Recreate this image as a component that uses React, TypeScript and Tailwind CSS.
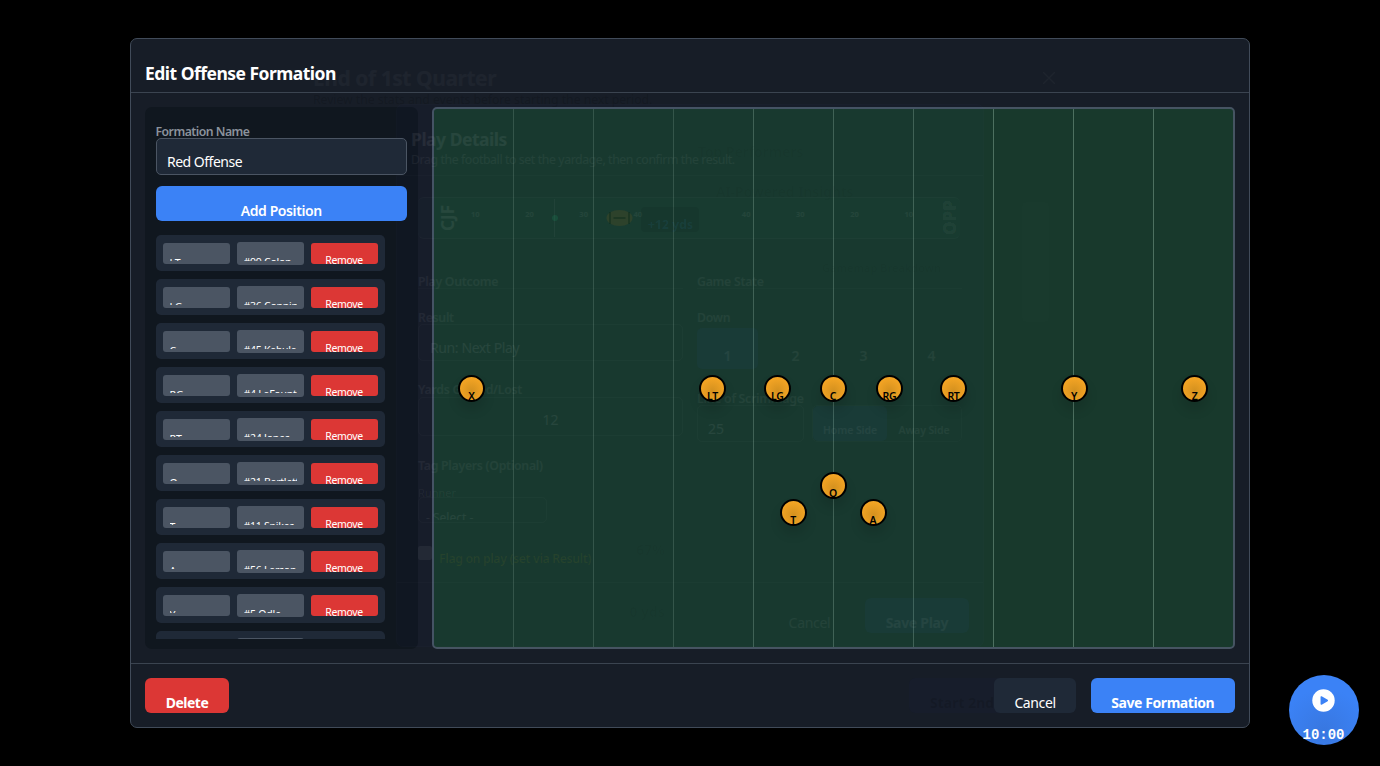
import React from "react";

const roster = [
  { pos: "LT", player: "#99 Colon" },
  { pos: "LG", player: "#36 Connin" },
  { pos: "C", player: "#45 Kabula" },
  { pos: "RG", player: "#4 LaFount" },
  { pos: "RT", player: "#24 Jones" },
  { pos: "Q", player: "#21 Bartlett" },
  { pos: "T", player: "#11 Spikes" },
  { pos: "A", player: "#56 Larson" },
  { pos: "Y", player: "#5 Odle" },
  { pos: "X", player: "#8 Reed" },
];

// Marker centres on the field canvas
const markers = [
  { label: "X", x: 38, y: 279.5 },
  { label: "LT", x: 279, y: 279.5 },
  { label: "LG", x: 343.8, y: 279.5 },
  { label: "C", x: 399.5, y: 279.5 },
  { label: "RG", x: 456, y: 279.5 },
  { label: "RT", x: 520, y: 279.5 },
  { label: "Y", x: 640.5, y: 279.5 },
  { label: "Z", x: 761, y: 279.5 },
  { label: "Q", x: 399.5, y: 376.5 },
  { label: "T", x: 359.5, y: 403.6 },
  { label: "A", x: 439.5, y: 403.6 },
];

function QuarterSummaryDialog() {
  return (
    <div className="pointer-events-none absolute left-[299px] top-[44px] z-10 flex h-[684px] w-[764px] flex-col px-[14px] pb-[15px] pt-[22px]">
      <header className="flex h-[42px] justify-between">
        <div>
          <h2 className="text-[21px] font-bold leading-[24px] tracking-[-0.45px] text-white/[0.032]">End of 1st Quarter</h2>
          <p className="mt-[2px] text-[12.25px] leading-[16px] tracking-[-0.05px] text-black/[0.14]">
            Review the stats and events before starting the next period.
          </p>
        </div>
        <svg className="mr-[-6px] mt-[6px]" width="12" height="12" stroke="#fff" strokeOpacity="0.03" strokeWidth="1.5">
          <path d="M0 0 12 12M12 0 0 12" />
        </svg>
      </header>
      <div className="flex flex-1">
        <div className="flex w-[385px] flex-col items-end justify-end pb-[56px] pr-[33px] font-bold text-black/[0.03]">
          <span className="mb-[42px] text-[14px] leading-[20px]">67%</span>
          <span className="text-[14px] leading-[20px]">0 yds</span>
        </div>
        <div className="flex flex-1 justify-between pt-[34px]">
          <div className="flex flex-col font-semibold text-black/[0.04]">
            <span className="text-[14px] leading-[20px]">Top Performers</span>
            <span className="ml-[18px] mt-[20px] text-[14px] leading-[20px]">AI-Powered Insights</span>
            <span className="ml-[124px] mt-[56px] text-[11px] leading-[20px] text-black/[0.04]">Gamemap Breakdown</span>
          </div>
          <div className="mt-[60px] h-[120px] w-[27px] rounded-[4px] bg-white/[0.006]" />
        </div>
      </div>
      <footer className="flex justify-end">
        <div className="h-[35px] w-[140px] rounded-[6px] bg-[#2030ff]/[0.02] pl-[21px] pt-[15px] text-[14px] font-bold leading-[20px] text-black/[0.12]">
          Start 2nd
        </div>
      </footer>
    </div>
  );
}

const ghostLabel = "text-[12.25px] font-semibold leading-[16px] tracking-[-0.25px] text-white/[0.05]";
const ghostField = "rounded-[5px] border border-white/[0.018]";

function PlayDetailsDialog() {
  return (
    <div className="pointer-events-none absolute left-[396px] top-[104px] z-10 flex h-[543px] w-[588px] flex-col rounded-[7px] border border-white/[0.012] bg-[#3b5cff]/[0.014]">
      <header className="h-[71px] border-b border-white/[0.015] px-[14px] pt-[22px]">
        <h2 className="text-[17.5px] font-bold leading-[24px] tracking-[-0.48px] text-white/[0.065]">Play Details</h2>
        <p className="mt-[1px] whitespace-nowrap text-[12.25px] leading-[16px] tracking-[-0.38px] text-white/[0.05]">
          Drag the football to set the yardage, then confirm the result.
        </p>
      </header>

      <div className="flex flex-1 flex-col px-[21px] pt-[21px]">
        <div className="relative flex h-[42px] w-[542px] items-center justify-between rounded-[6px] border-y border-white/[0.018] bg-[#30bb80]/[0.015] pl-[20px]">
          <span className="rotate-180 text-[17px] font-bold leading-[20px] text-white/[0.065] [writing-mode:vertical-rl]">CJF</span>
          <div className="-ml-[14px] flex w-[442px] justify-between pb-[8px] text-[7.5px] font-bold leading-[10px] text-white/[0.05]">
            {[10, 20, 30, 40, 50, 40, 30, 20, 10].map((n, i) => (
              <span key={i} className={i === 4 ? "text-transparent" : ""}>
                {n}
              </span>
            ))}
          </div>
          <span className="rotate-180 text-[17px] font-black leading-[20px] text-white/[0.055] [writing-mode:vertical-rl]">OPP</span>
          <div className="absolute left-[136px] top-[1px] flex h-[38px] w-px items-center justify-center bg-white/[0.04]">
            <i className="h-[6px] w-[6px] shrink-0 rounded-full bg-[#20e090]/[0.11]" />
          </div>
          <svg className="absolute left-[187px] top-[11px]" width="29" height="18">
            <ellipse cx="14.5" cy="9" rx="13" ry="8" fill="#a96a14" fillOpacity="0.15" />
            <path d="M8.5 9h12M5 3v12M24 3v12" stroke="#06281a" strokeOpacity="0.4" strokeWidth="2" />
          </svg>
          <div className="absolute left-[223px] top-[9px] h-[25px] w-[58px] rounded-[4px] bg-black/[0.06] pl-[7px] pt-[10px] text-[12.25px] font-bold leading-[16px] text-[#38b0ff]/[0.08]">
            +12 yds
          </div>
        </div>

        <div className="mt-[31px] grid grid-cols-2 gap-[14px]">
          <div className="flex flex-col">
            <h3 className={"h-[19px] border-b border-white/[0.015] pt-[4px] " + ghostLabel}>Play Outcome</h3>
            <span className={"mt-[21px] h-[14px] " + ghostLabel}>Result</span>
            <div className={"h-[37px] pl-[11px] pt-[13px] text-[14px] leading-[20px] tracking-[-0.4px] text-white/[0.065] " + ghostField}>Run: Next Play</div>
            <span className={"mt-[21px] h-[15px] " + ghostLabel}>Yards Gained/Lost</span>
            <div className={"h-[39px] pt-[12px] text-center text-[14px] leading-[20px] text-white/[0.065] " + ghostField}>12</div>
          </div>
          <div className="flex flex-col">
            <h3 className={"h-[19px] border-b border-white/[0.015] pt-[4px] " + ghostLabel}>Game State</h3>
            <span className={"mt-[21px] h-[18px] " + ghostLabel}>Down</span>
            <div className="grid h-[41px] grid-cols-4 gap-[7px] text-center text-[14px] font-semibold leading-[20px] text-white/[0.05]">
              <span className="rounded-[5px] bg-[#3b82f6]/[0.04] pt-[18px]">1</span>
              <span className="pt-[18px]">2</span>
              <span className="pt-[18px]">3</span>
              <span className="pt-[18px]">4</span>
            </div>
            <span className={"mt-[22px] h-[14px] " + ghostLabel}>Line of Scrimmage</span>
            <div className="flex h-[37px] gap-[8px]">
              <div className={"w-[107px] pl-[10px] pt-[13px] text-[14px] leading-[20px] text-white/[0.065] " + ghostField}>25</div>
              <div className="grid flex-1 grid-cols-2 rounded-[5px] border border-white/[0.015] text-center text-[10.5px] font-semibold leading-[20px] tracking-[-0.1px] text-white/[0.05]">
                <span className="rounded-[5px] bg-[#3b82f6]/[0.04] pt-[14px]">Home Side</span>
                <span className="pt-[14px]">Away Side</span>
              </div>
            </div>
          </div>
        </div>

        <h3 className={"mt-[16px] " + ghostLabel}>Tag Players (Optional)</h3>
        <span className="mt-[12px] h-[11px] text-[11px] leading-[14px] text-white/[0.055]">Runner</span>
        <div className={"h-[26px] w-[129px] overflow-hidden pl-[7px] " + ghostField}>
          <div className="h-[22px] overflow-hidden pt-[11px] text-[12px] leading-[18px] text-white/[0.065]">- Select -</div>
        </div>
        <div className="mt-[23px] flex gap-[7px]">
          <i className="h-[14px] w-[14px] rounded-[2px] bg-white/[0.055]" />
          <span className="pt-[5px] text-[12.25px] font-semibold leading-[16px] tracking-[-0.34px] text-[#b4a018]/[0.09]">
            Flag on play (set via Result)
          </span>
        </div>
      </div>

      <footer className="flex h-[64px] shrink-0 justify-end gap-[14px] border-t border-white/[0.015] px-[14px] pt-[15px] text-center text-[14px] leading-[20px]">
        <span className="h-[35px] w-[83px] pt-[15px] tracking-[-0.3px] text-white/[0.05]">Cancel</span>
        <span className="h-[35px] w-[104px] rounded-[6px] bg-[#3b82f6]/[0.04] pt-[15px] font-bold tracking-[-0.3px] text-white/[0.05]">Save Play</span>
      </footer>
    </div>
  );
}

function PositionRow({ pos, player }: { pos: string; player: string }) {
  return (
    <div className="grid h-[36px] w-[229px] shrink-0 grid-cols-3 items-center gap-[7px] rounded-[5px] bg-[#1f2937] px-[7px]">
      <div className="h-[21px] rounded-[3px] bg-[#4b5563] px-[7px]">
        <div className="h-[18px] overflow-hidden pt-[13.5px] text-[10.5px] leading-[14px] text-white">{pos}</div>
      </div>
      <div className="h-[23px] rounded-[3px] bg-[#4b5563] px-[7px]">
        <div className="h-[19px] overflow-hidden whitespace-nowrap pt-[13px] text-[10.5px] leading-[14px] tracking-[-0.25px] text-white">
          {player}
        </div>
      </div>
      <button className="h-[21px] rounded-[3px] bg-[#dc3735] pt-[10px] text-center text-[10.5px] leading-[14px] tracking-[-0.35px] text-white">
        Remove
      </button>
    </div>
  );
}

export default function App() {
  return (
    <div className="relative flex h-[766px] w-[1380px] justify-center overflow-hidden bg-black pt-[38px] font-['Noto_Sans','Open_Sans',sans-serif] text-white">
      <div className="flex h-[690px] w-[1120px] flex-col rounded-[7px] border border-[#414b59] bg-[#171d27]">
        <header className="h-[54px] shrink-0 border-b border-[#3b4450] px-[14px] pt-[22px]">
          <h2 className="text-[17.5px] font-bold leading-[24px] tracking-[-0.52px]">Edit Offense Formation</h2>
        </header>

        <main className="flex h-[570px] shrink-0 gap-[14px] p-[14px]">
          <aside className="flex w-[272.5px] shrink-0 flex-col rounded-[7px] bg-[#10171f] px-[10.5px] pb-[10px] pt-[17px]">
            <label className="h-[14px] text-[12.25px] font-semibold leading-[16px] tracking-[-0.52px] text-[#8b929c]">Formation Name</label>
            <div className="relative z-20 h-[37px] shrink-0 rounded-[5px] border border-[#4b5563] bg-[#1f2937] px-[10.5px] pt-[13px] text-[14px] leading-[20px] tracking-[-0.5px]">
              Red Offense
            </div>
            <button className="relative z-20 mt-[10.5px] h-[35px] shrink-0 rounded-[6px] bg-[#3b82f6] pt-[15px] text-center text-[14px] font-semibold leading-[20px] tracking-[-0.4px]">
              Add Position
            </button>
            <div className="mt-[14.5px] flex min-h-0 flex-1 flex-col gap-[8px] overflow-hidden">
              {roster.map((r) => (
                <PositionRow key={r.pos} pos={r.pos} player={r.player} />
              ))}
            </div>
          </aside>

          <section className="relative grid min-w-0 flex-1 grid-cols-[repeat(9,80px)_1fr] rounded-[5px] border-2 border-[#465462] bg-[#18392c]">
            {Array.from({ length: 10 }, (_, i) => (
              <div key={i} className={i < 3 ? "border-r border-[#345648]" : i < 6 ? "border-r border-[#406354]" : i < 9 ? "border-r border-[#4d7060]" : ""} />
            ))}
            {markers.map((m) => (
              <div
                key={m.label}
                className="absolute z-20 -ml-[13.5px] -mt-[13.5px] h-[27px] w-[27px] rounded-full border-2 border-black bg-[radial-gradient(circle_at_50%_60%,#d4911f_0%,#f5a524_75%)] pt-[12px] text-center text-[10.5px] font-semibold leading-[14px] tracking-[-0.3px] text-black shadow-[0_8px_12px_rgba(0,0,0,0.12)]"
                style={{ left: m.x, top: m.y }}
              >
                <span className="-mx-2 block">{m.label}</span>
              </div>
            ))}
          </section>
        </main>

        <footer className="flex flex-1 items-start border-t border-[#3b4450] px-[14px] pt-[14px] text-[14px] leading-[20px]">
          <button className="h-[35px] w-[84px] rounded-[6px] bg-[#dc3735] pt-[15px] font-bold tracking-[-0.5px]">Delete</button>
          <button className="relative z-20 ml-auto h-[35px] w-[82px] rounded-[6px] bg-[#1f2937] pt-[15px] tracking-[-0.4px]">Cancel</button>
          <button className="relative z-20 ml-[14.5px] h-[35px] w-[144.5px] rounded-[6px] bg-[#3b82f6] pt-[15px] font-bold tracking-[-0.42px]">
            Save Formation
          </button>
        </footer>
      </div>

      <QuarterSummaryDialog />
      <PlayDetailsDialog />

      <button className="absolute left-[1289px] top-[675px] z-30 flex h-[70px] w-[70px] flex-col items-center rounded-full bg-[radial-gradient(circle_at_50%_80%,#3877e0_0%,#3b82f6_65%)] pr-[1px] pt-[14px]">
        <svg width="23" height="23" viewBox="0 0 23 23">
          <circle cx="11.5" cy="11.5" r="11.2" fill="#fff" />
          <path d="M9.3 8v7l6-3.5z" fill="#3b82f6" stroke="#3b82f6" strokeWidth="1.5" strokeLinejoin="round" />
        </svg>
        <span className="mt-[13px] font-['Liberation_Mono',monospace] text-[14px] font-bold leading-[20px]">10:00</span>
      </button>
    </div>
  );
}
